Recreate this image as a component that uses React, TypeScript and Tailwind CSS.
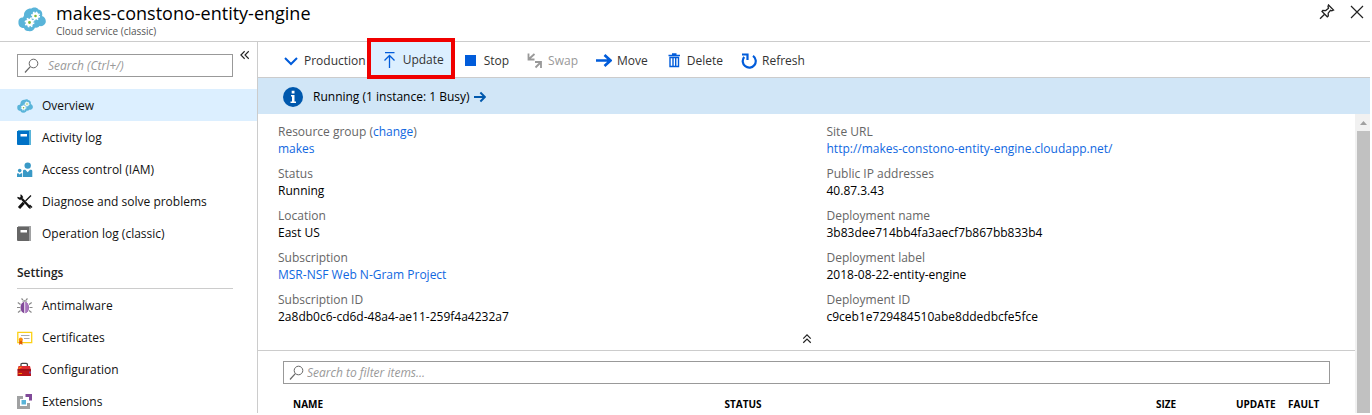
import type { ReactNode } from "react";

function Gear({ cx, cy, r }: { cx: number; cy: number; r: number }) {
  const c = 2 * Math.PI * r;
  return (
    <g>
      <circle cx={cx} cy={cy} r={r} fill="#7fb939" stroke="#fff" strokeWidth={r * 0.9} />
      <circle
        cx={cx}
        cy={cy}
        r={r * 1.6}
        fill="none"
        stroke="#fff"
        strokeWidth={r * 0.6}
        strokeDasharray={`${(c * 1.6) / 16} ${(c * 1.6) / 16}`}
      />
    </g>
  );
}

function CloudIcon({ className }: { className: string }) {
  return (
    <svg className={className} viewBox="0 0 28 25" aria-hidden="true">
      <path
        d="M6 8C6 3.500 10 1 13.500 1.500C15 0 19 0 20.500 2.500C23.500 3 25 6 24 9C27 10 28.500 13 27.500 16C26.500 18.500 24 19.500 21.500 19C20.500 20.500 18.500 21 17 20.500C16 23.500 13 25 10.500 24C8.500 24.500 6.500 23 6 21C2.500 21 0 18.500 0.500 15C0 12 3 10 5 10.500C5.500 9.500 6 9 6 8Z"
        fill="#59b4d9"
      />
      <Gear cx={17.500} cy={9} r={2.400} />
      <Gear cx={11.500} cy={15.500} r={2.600} />
    </svg>
  );
}

function BookIcon({ main, edge }: { main: string; edge: string }) {
  return (
    <svg className="size-4" viewBox="0 0 16 16" aria-hidden="true">
      <path d="M1 0H14V15H12V2H1Z" fill={edge} />
      <path d="M0 1H12V15H1Q0 15 0 14Z" fill={main} />
      <path d="M3.500 4H10V6.500H3.500Z" fill="#fff" />
    </svg>
  );
}

function PeopleIcon() {
  return (
    <svg className="size-4" viewBox="0 0 16 16" fill="#3999c6" aria-hidden="true">
      <circle cx="10.700" cy="3.600" r="3.200" />
      <path d="M6 15V9Q6 7.800 7.200 7.800H8.400L10.700 10.300L13 7.800H14Q15.300 7.800 15.300 9V15Z" />
      <circle cx="2.700" cy="8.600" r="1.800" />
      <path d="M0 15V12Q0 11.200 0.900 11.200H1.400L2.700 12.600L4 11.200H5.200V15Z" />
    </svg>
  );
}

function ToolsIcon() {
  return (
    <svg className="size-4" viewBox="0 0 16 16" fill="none" stroke="#111" aria-hidden="true">
      <path d="M14 1.500L8.500 7" strokeWidth="1.300" />
      <path d="M6.800 8.700L2 14" strokeWidth="3" />
      <path d="M5 5L13 13.500" strokeWidth="2.300" />
      <path d="M3.800 0.800C6.500 2 6 5.500 3.500 5.600C2 5.500 1 4.800 0.700 3.300L3 4L4 3Z" fill="#111" strokeWidth="0.800" />
      <path d="M11 12L13.500 14.500M12.500 11L15 13.500" strokeWidth="1.400" />
    </svg>
  );
}

function BugIcon() {
  return (
    <svg className="size-4" viewBox="0 0 16 16" aria-hidden="true">
      <path
        d="M4.500 0.500L6 2M10.500 0.500L9 2M0.800 4.500L3.500 6.500M0 9.500H3M1 14.500L3.500 12.500M14.700 4.500L12 6.500M15.500 9.500H12.500M14.500 14.500L12 12.500"
        stroke="#8a8a8a"
        strokeWidth="1.200"
        fill="none"
      />
      <path d="M5 3.500Q7.700 0.800 10.500 3.500Z" fill="#7a7a7a" />
      <ellipse cx="7.700" cy="9.500" rx="4.200" ry="5.700" fill="#804998" />
      <path d="M8 3.900A4.200 5.700 0 0 1 8 15.200Z" fill="#a873bd" />
      <path d="M7.700 4V15.500" stroke="#fff" strokeWidth="0.900" />
    </svg>
  );
}

function CertificateIcon() {
  return (
    <svg className="size-4" viewBox="0 0 16 16" aria-hidden="true">
      <path d="M0.800 2.300H14.700V12.700H0.800Z" fill="#fff" stroke="#fcd116" strokeWidth="1.300" />
      <path d="M4 5.500H12.500M7 8.500H12.500" stroke="#aaa" strokeWidth="1" />
      <path d="M2.200 10H5.400V15L3.800 13.800L2.200 15Z" fill="#dd5900" />
      <circle cx="3.800" cy="9.300" r="1.900" fill="#ff8c00" />
    </svg>
  );
}

function ToolboxIcon() {
  return (
    <svg className="size-4" viewBox="0 0 16 16" aria-hidden="true">
      <path d="M4 4.500V2.500Q4 1.300 5.200 1.300H9.200Q10.400 1.300 10.400 2.500V4.500" fill="none" stroke="#444" strokeWidth="1.300" />
      <path d="M1.500 4H13L14 8H0.500Z" fill="#e02a2f" />
      <path d="M0.500 8H14V14H0.500Z" fill="#ba141a" />
      <path d="M0.500 7.800H14" stroke="#7d0d10" />
      <path d="M1.500 6.500L4.500 5M1.500 11.500H5" stroke="#ff8c00" strokeWidth="1.200" />
      <path d="M12 9.500H14V11.500H12Z" fill="#804998" />
    </svg>
  );
}

function ExtensionIcon() {
  return (
    <svg className="size-4" viewBox="0 0 16 16" aria-hidden="true">
      <path d="M0 2H6V5H3V12H10V9H13V15H0Z" fill="#a0a1a2" />
      <path d="M8.500 0H15V6.500H12V3H8.500Z" fill="#804998" />
      <path d="M4.500 6H9V10.500H4.500Z" fill="#59b4d9" />
    </svg>
  );
}

function SearchIcon() {
  return (
    <svg className="size-4 shrink-0" viewBox="0 0 16 16" fill="none" stroke="#666" aria-hidden="true">
      <circle cx="9.500" cy="5.500" r="4.300" />
      <path d="M6.300 8.700L1 14.500" strokeWidth="1.200" />
    </svg>
  );
}

function StrokeIcon({ children, className }: { children: ReactNode; className: string }) {
  return (
    <svg className={className} viewBox="0 0 16 16" fill="none" stroke="currentColor" aria-hidden="true">
      {children}
    </svg>
  );
}

const blue = "size-4 text-[#015cda]";

const menu = [
  { label: "Overview", icon: <CloudIcon className="size-4" />, active: true },
  { label: "Activity log", icon: <BookIcon main="#0072c6" edge="#59b4d9" /> },
  { label: "Access control (IAM)", icon: <PeopleIcon /> },
  { label: "Diagnose and solve problems", icon: <ToolsIcon /> },
  { label: "Operation log (classic)", icon: <BookIcon main="#666666" edge="#a0a1a2" /> },
];

const settings = [
  { label: "Antimalware", icon: <BugIcon /> },
  { label: "Certificates", icon: <CertificateIcon /> },
  { label: "Configuration", icon: <ToolboxIcon /> },
  { label: "Extensions", icon: <ExtensionIcon /> },
];

type Item = { label: string; icon: ReactNode; active?: boolean };

function MenuList({ items }: { items: Item[] }) {
  return (
    <ul>
      {items.map((item) => (
        <li key={item.label}>
          <a
            href="#"
            aria-current={item.active ? "page" : undefined}
            className={`flex h-8 items-center gap-[9px] pt-px pl-[17px] text-[#111] ${item.active ? "bg-[#dcefff]" : ""}`}
          >
            {item.icon}
            {item.label}
          </a>
        </li>
      ))}
    </ul>
  );
}

function Property({ label, children }: { label: ReactNode; children: ReactNode }) {
  return (
    <div className="leading-[17px]">
      <dt className="text-[#666]">{label}</dt>
      <dd>{children}</dd>
    </div>
  );
}

function Link({ children }: { children: ReactNode }) {
  return (
    <a href="#" className="text-[#1068df]">
      {children}
    </a>
  );
}

function Command({ icon, children, disabled }: { icon: ReactNode; children: ReactNode; disabled?: boolean }) {
  return (
    <button type="button" disabled={disabled} className="flex items-center gap-[5px] text-[#333] disabled:text-[#999]">
      {icon}
      {children}
    </button>
  );
}

export default function App() {
  return (
    <div className="flex h-screen flex-col overflow-hidden bg-white pr-0.5 pb-0.5 font-['Open_Sans',sans-serif] text-xs text-black">
      <header className="flex h-[42px] shrink-0 border-b border-[#ccc] pl-[18px]">
        <CloudIcon className="mt-[7px] h-[25px] w-7" />
        <div className="ml-2.5 flex-1">
          <h1 className="text-lg leading-[26px]">makes-constono-entity-engine</h1>
          <p className="text-[10px] leading-2.5 text-[#555]">Cloud service (classic)</p>
        </div>
        <div className="flex h-6 items-center gap-3.5 pr-[5px]">
          <button type="button" aria-label="Pin">
            <StrokeIcon className="size-4 text-[#222]">
              <path d="M9.500 1L14.500 6L12.800 6.800L11.500 6.300L9.200 9.200L9.300 12L8.300 12.800L3 7.500L3.800 6.500L6.700 6.600L9.500 4.300L9 2.600Z" strokeWidth="1.300" />
              <path d="M5.600 10.200L1 14.800" strokeWidth="1.300" />
            </StrokeIcon>
          </button>
          <button type="button" aria-label="Close">
            <StrokeIcon className="size-4 text-[#222]">
              <path d="M2 2L14 14M14 2L2 14" strokeWidth="1.200" />
            </StrokeIcon>
          </button>
        </div>
      </header>

      <div className="flex min-h-0 flex-1">
        <nav className="w-[258px] shrink-0 overflow-hidden border-r border-[#ccc]">
          <div className="flex h-[47px] gap-1.5 pt-3 pl-[17px]">
            <label className="flex h-[23px] w-54 items-center gap-2 border border-[#999] pl-1.5">
              <SearchIcon />
              <input
                type="search"
                aria-label="Search"
                placeholder="Search (Ctrl+/)"
                className="min-w-0 flex-1 italic outline-none placeholder:text-[#999]"
              />
            </label>
            <button type="button" aria-label="Collapse menu" className="-mt-2 h-[18px]">
              <StrokeIcon className="size-3 text-[#222]">
                <path d="M7.500 3L2.500 8L7.500 13M13 3L8 8L13 13" strokeWidth="1.500" />
              </StrokeIcon>
            </button>
          </div>
          <MenuList items={menu} />
          <h2 className="mr-6 ml-[17px] flex h-10 items-center border-b border-[#ccc] pt-2 font-semibold text-[#222]">Settings</h2>
          <MenuList items={settings} />
        </nav>

        <main className="flex min-w-0 flex-1 flex-col">
          <div className="flex h-9 shrink-0 items-center border-b border-[#ccc] pt-0.5 pl-[25px]">
            <Command
              icon={
                <StrokeIcon className={blue}>
                  <path d="M2 5L8 11L14 5" strokeWidth="2" />
                </StrokeIcon>
              }
            >
              Production
            </Command>
            <button
              type="button"
              className="z-10 -mt-1.5 ml-px flex h-[41px] w-[88px] shrink-0 items-center gap-[5px] self-start border-4 border-[#f00000] bg-[#dcefff] pt-0.5 pl-[11px] text-[#333]"
            >
              <StrokeIcon className={blue}>
                <path d="M3 0.500H12.500M7.500 16V4M2.500 8.500L7.500 3.500L12.500 8.500" strokeWidth="1.300" />
              </StrokeIcon>
              Update
            </button>
            <div className="flex gap-[18px] pl-2">
              <Command
                icon={
                  <StrokeIcon className={blue}>
                    <path d="M2 2H13V13H2Z" fill="currentColor" stroke="none" />
                  </StrokeIcon>
                }
              >
                Stop
              </Command>
              <Command
                disabled
                icon={
                  <StrokeIcon className="size-4 text-[#999]">
                    <path d="M7.500 1L2.500 5.500M1.500 0.500V6.500H7.500M8.500 14.500L13.500 9.500M8 9H14V15" strokeWidth="1.800" />
                  </StrokeIcon>
                }
              >
                Swap
              </Command>
              <Command
                icon={
                  <StrokeIcon className={blue}>
                    <path d="M0 7.500H14.500M8.500 2L14.500 7.500L8.500 13" strokeWidth="2.600" />
                  </StrokeIcon>
                }
              >
                Move
              </Command>
              <Command
                icon={
                  <StrokeIcon className={blue}>
                    <path d="M2.500 2.500H14M6 1H10.500M4 4.500V13.500H12.500V4.500Z M7 5V13M9.700 5V13" strokeWidth="1.400" />
                  </StrokeIcon>
                }
              >
                Delete
              </Command>
              <Command
                icon={
                  <StrokeIcon className={blue}>
                    <path d="M12 2.800A6.500 6.500 0 1 1 3.200 4M1 1.500H6.500V7" strokeWidth="2.200" />
                  </StrokeIcon>
                }
              >
                Refresh
              </Command>
            </div>
          </div>

          <div className="flex h-9 shrink-0 items-center gap-1 bg-[#d1e6f7] pt-px pl-[25px]">
            <svg className="mr-1.5 size-5" viewBox="0 0 20 20" aria-hidden="true">
              <circle cx="10" cy="10" r="10" fill="#0058ad" />
              <path d="M8 8H11.500V14.500H13V16H7.500V14.500H9V9.500H8ZM8.700 3.700H11.500V6.500H8.700Z" fill="#fff" />
            </svg>
            <span>Running (1 instance: 1 Busy)</span>
            <StrokeIcon className="size-3 text-[#0058ad]">
              <path d="M0 8H14.500M8.500 2L14.500 8L8.500 14" strokeWidth="2.600" />
            </StrokeIcon>
          </div>

          <div className="flex min-h-0 flex-1">
            <div className="min-w-0 flex-1 overflow-hidden">
              <section className="border-b border-[#ccc] pt-[9px] pb-[5px]">
                <dl className="grid grid-flow-col grid-cols-2 grid-rows-5 gap-y-2 *:pl-5">
                  <Property label={<>Resource group (<Link>change</Link>)</>}>
                    <Link>makes</Link>
                  </Property>
                  <Property label="Status">Running</Property>
                  <Property label="Location">East US</Property>
                  <Property label="Subscription">
                    <Link>MSR-NSF Web N-Gram Project</Link>
                  </Property>
                  <Property label="Subscription ID">2a8db0c6-cd6d-48a4-ae11-259f4a4232a7</Property>
                  <Property label="Site URL">
                    <Link>http://makes-constono-entity-engine.cloudapp.net/</Link>
                  </Property>
                  <Property label="Public IP addresses">40.87.3.43</Property>
                  <Property label="Deployment name">3b83dee714bb4fa3aecf7b867bb833b4</Property>
                  <Property label="Deployment label">2018-08-22-entity-engine</Property>
                  <Property label="Deployment ID">c9ceb1e729484510abe8ddedbcfe5fce</Property>
                </dl>
                <button type="button" aria-label="Collapse essentials" className="mx-auto mt-2 block">
                  <StrokeIcon className="size-3 text-[#222]">
                    <path d="M3 7.500L8 2.500L13 7.500M3 13L8 8L13 13" strokeWidth="1.600" />
                  </StrokeIcon>
                </button>
              </section>
              <section className="pt-2.5 pr-[25px] pl-[25px]">
                <label className="flex h-[23px] items-center gap-0.5 border border-[#999] pl-[5px]">
                  <SearchIcon />
                  <input
                    type="search"
                    aria-label="Filter items"
                    placeholder="Search to filter items..."
                    className="min-w-0 flex-1 italic outline-none placeholder:text-[#999]"
                  />
                </label>
                <table className="mt-3 w-full table-fixed text-left text-[10px] leading-4">
                  <thead>
                    <tr className="*:pl-2.5 *:font-bold">
                      <th scope="col">NAME</th>
                      <th scope="col">STATUS</th>
                      <th scope="col" className="w-20">SIZE</th>
                      <th scope="col" className="w-[52px]">UPDATE</th>
                      <th scope="col" className="w-[52px]">FAULT</th>
                    </tr>
                  </thead>
                </table>
              </section>
            </div>
            <div className="flex w-[15px] shrink-0 flex-col bg-[#f1f1f1] pl-0.5" aria-hidden="true">
              <svg className="h-[17px] w-full" viewBox="0 0 13 17">
                <path d="M3 11L6.500 7L10 11Z" fill="#a0a0a0" />
              </svg>
              <div className="flex-1 bg-[#c1c1c1]" />
            </div>
          </div>
        </main>
      </div>
    </div>
  );
}
